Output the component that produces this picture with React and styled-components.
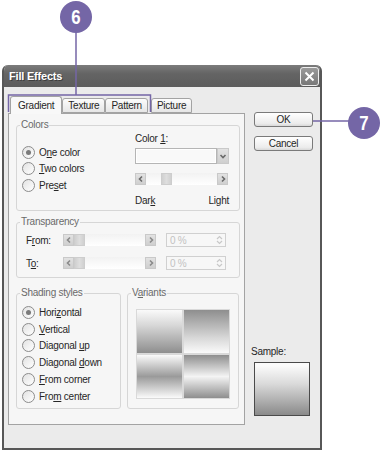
import React from 'react';
import styled, {createGlobalStyle} from 'styled-components';

const GlobalStyle = createGlobalStyle`
  html, body {
    margin: 0;
    padding: 0;
    background: #ffffff;
  }
  body {
    font-family: "Liberation Sans", Arial, sans-serif;
    font-size: 10px;
    letter-spacing: -0.25px;
    color: #262626;
  }
`;

const Page = styled.div`
  position: relative;
  width: 381px;
  height: 453px;
  overflow: hidden;
  padding: 65px 0 0 2px;
  box-sizing: border-box;
`;

const Callout = styled.div`
  position: absolute;
  left: ${p => p.x - 16}px;
  top: ${p => p.y - 16}px;
  width: 32px;
  height: 32px;
  border-radius: 50%;
  background: #7466a6;
  color: #fff;
  font-family: "Liberation Sans", Arial, sans-serif;
  font-weight: bold;
  font-size: 21px;
  display: flex;
  align-items: center;
  justify-content: center;
  z-index: 3;
  span {
    display: inline-block;
    transform: scaleX(0.8);
  }
`;

const Leaders = styled.svg`
  position: absolute;
  left: 0;
  top: 0;
  width: 381px;
  height: 453px;
  pointer-events: none;
  z-index: 2;
`;

const Dialog = styled.div`
  width: 320px;
  height: 385px;
  box-sizing: border-box;
  border: 2px solid #575757;
  border-top: none;
  border-radius: 6px 6px 0 0;
  background: #ebebeb;
  display: flex;
  flex-direction: column;
  overflow: hidden;
`;

const TitleBar = styled.div`
  height: 22px;
  flex: none;
  background: linear-gradient(#7c7c7c, #646464 40%, #5c5c5c);
  display: flex;
  align-items: center;
  justify-content: space-between;
  padding: 0 1px 0 5px;
`;

const Title = styled.span`
  color: #fff;
  font-weight: bold;
  font-size: 11px;
  letter-spacing: -0.2px;
  text-shadow: 1px 1px 0 #3e3e3e;
`;

const CloseBtn = styled.div`
  width: 17px;
  height: 17px;
  border: 1px solid #eee;
  border-radius: 3px;
  background: linear-gradient(#9a9a9a, #787878);
  display: flex;
  align-items: center;
  justify-content: center;
`;

const Body = styled.div`
  flex: 1;
  display: flex;
  padding: 8px 0 0 4px;
  gap: 8px;
`;

const LeftCol = styled.div`
  width: 237px;
  display: flex;
  flex-direction: column;
`;

const TabRow = styled.div`
  display: flex;
  align-items: flex-end;
  height: 18px;
  padding-left: 2px;
`;

const Tab = styled.div`
  height: ${p => (p.$active ? 18 : 15)}px;
  padding: 0 ${p => (p.$active ? 7 : 5)}px;
  margin-left: ${p => (p.$gap ? 3 : 0)}px;
  box-sizing: border-box;
  border: 1px solid #a3a3a3;
  border-bottom: ${p => (p.$active ? 'none' : '1px solid #a3a3a3')};
  border-radius: 3px 3px 0 0;
  background: ${p => (p.$active ? '#f8f8f8' : 'linear-gradient(#fcfcfc, #e6e6e6)')};
  display: flex;
  align-items: center;
  position: relative;
  top: ${p => (p.$active ? 1 : 0)}px;
  z-index: ${p => (p.$active ? 1 : 0)};
`;

const Panel = styled.div`
  height: 312px;
  box-sizing: border-box;
  border: 1px solid #a3a3a3;
  background: #f6f6f6;
  padding: 5px 5px 0 7px;
  display: flex;
  flex-direction: column;
`;

const Group = styled.fieldset`
  margin: 0;
  box-sizing: border-box;
  height: ${p => p.$h}px;
  width: ${p => p.$w || 224}px;
  border: 1px solid #d6d6d6;
  border-radius: 3px;
  padding: 0 8px;
  margin-top: ${p => p.$mt || 0}px;
`;

const Legend = styled.legend`
  color: #6a6a6a;
  padding: 0 1px;
  margin-left: -5px;
  line-height: 12px;
`;

const ColorsGrid = styled.div`
  display: grid;
  grid-template-columns: 110px 94px;
`;

const RadioList = styled.div`
  display: flex;
  flex-direction: column;
  padding-top: ${p => p.$pt}px;
  margin-left: -3px;
`;

const RadioRow = styled.div`
  height: ${p => p.$h}px;
  display: flex;
  align-items: center;
  gap: 4px;
  white-space: nowrap;
`;

const RadioDot = styled.span`
  width: 11px;
  height: 11px;
  border-radius: 50%;
  border: 1px solid #8c8c8c;
  background: linear-gradient(135deg, #e2e2e2, #ffffff);
  display: flex;
  align-items: center;
  justify-content: center;
  flex: none;
  &::after {
    content: '';
    width: 5px;
    height: 5px;
    border-radius: 50%;
    background: ${p => (p.$on ? '#7a7a7a' : 'transparent')};
  }
`;

const U = styled.span`
  text-decoration: underline;
`;

const ColorSide = styled.div`
  display: flex;
  flex-direction: column;
  padding-top: 1px;
`;

const FieldLabel = styled.div`
  height: 13px;
  line-height: 13px;
`;

const Dropdown = styled.div`
  margin-top: 3px;
  height: 16px;
  display: flex;
  box-sizing: border-box;
`;

const DropField = styled.div`
  flex: 1;
  border: 1px solid #b5b5b5;
  background: #f9f9f9;
  box-shadow: inset 0 0 0 1px #fff;
`;

const ArrowBtn = styled.div`
  width: ${p => p.$w || 11}px;
  height: 100%;
  flex: none;
  background: linear-gradient(#e2e2e2, #cfcfcf);
  border: 1px solid #c9c9c9;
  box-sizing: border-box;
  display: flex;
  align-items: center;
  justify-content: center;
`;

const Slider = styled.div`
  height: 12px;
  width: ${p => p.$w}px;
  display: flex;
  background: linear-gradient(#f2f2f2, #ffffff);
  margin-top: ${p => p.$mt || 0}px;
  flex: none;
`;

const Thumb = styled.div`
  width: 11px;
  height: 100%;
  margin-left: ${p => p.$at}px;
  background: linear-gradient(90deg, #d0d0d0, #dedede, #d0d0d0);
  border: 1px solid #cdcdcd;
  box-sizing: border-box;
  margin-right: auto;
`;

const ScaleLabels = styled.div`
  display: flex;
  justify-content: space-between;
  margin-top: 9px;
  line-height: 13px;
`;

const TransRow = styled.div`
  height: 12px;
  display: flex;
  align-items: center;
  margin-top: ${p => p.$mt}px;
`;

const TransLabel = styled.div`
  width: 37px;
  margin-left: 1px;
  flex: none;
`;

const SpinBox = styled.div`
  width: 60px;
  height: 14px;
  margin-left: 10px;
  flex: none;
  box-sizing: border-box;
  border: 1px solid #d0d0d0;
  background: #f7f7f7;
  color: #c2c2c2;
  display: flex;
  align-items: center;
  justify-content: space-between;
  padding: 0 2px 0 3px;
`;

const BottomRow = styled.div`
  display: flex;
  gap: 6px;
  margin-top: 9px;
`;

const VariantGrid = styled.div`
  display: grid;
  grid-template-columns: 45px 45px;
  grid-auto-rows: 43px;
  gap: 2px;
  margin-top: 10px;
  background: #d9d9d9;
  padding: 1px;
  width: fit-content;
`;

const Swatch = styled.div`
  background: ${p => p.$bg};
`;

const RightCol = styled.div`
  width: 59px;
  display: flex;
  flex-direction: column;
  padding-top: 17px;
  margin-left: 1px;
`;

const Button = styled.div`
  height: 15px;
  box-sizing: border-box;
  border: 1px solid #7a7a7a;
  border-radius: 3px;
  background: linear-gradient(#ffffff, #ececec 80%, #d8d8d8);
  display: flex;
  align-items: center;
  justify-content: center;
  margin-bottom: 9px;
`;

const SampleLabel = styled.div`
  margin-top: 185px;
  line-height: 13px;
  margin-left: -3px;
`;

const SampleBox = styled.div`
  width: 56px;
  height: 54px;
  margin-top: 4px;
  box-sizing: border-box;
  border: 1px solid #4a4a4a;
  background: linear-gradient(#fbfbfb 5%, #dadada 40%, #8a8a8a);
`;

const Chevron = ({dir, color = '#6a6a6a'}) => {
  const d = {
    left: 'M5 1.5 L2.5 4 L5 6.5',
    right: 'M3 1.5 L5.5 4 L3 6.5',
    down: 'M1.5 3 L4 5.5 L6.5 3',
  }[dir];
  return (
    <svg width="8" height="8" viewBox="0 0 8 8">
      <path d={d} fill="none" stroke={color} strokeWidth="1.6"/>
    </svg>
  );
};

const SpinArrows = () => (
  <svg width="7" height="10" viewBox="0 0 7 10">
    <path d="M1 4 L3.5 1.5 L6 4 M1 6 L3.5 8.5 L6 6" fill="none" stroke="#c8c8c8" strokeWidth="1.2"/>
  </svg>
);

const Radio = ({on, h, children}) => (
  <RadioRow $h={h}>
    <RadioDot $on={on}/>
    <span>{children}</span>
  </RadioRow>
);

const variants = [
  'linear-gradient(#fafafa, #d8d8d8 35%, #8e8e8e)',
  'linear-gradient(#8e8e8e, #d8d8d8 65%, #fafafa)',
  'linear-gradient(#fafafa, #9a9a9a 50%, #fafafa)',
  'linear-gradient(#8e8e8e, #f4f4f4 50%, #8e8e8e)',
];

export default function App() {
  return (
    <>
      <GlobalStyle/>
      <Page>
        <Leaders viewBox="0 0 381 453">
          <g stroke="#7466a6" strokeWidth="1.5" fill="none">
            <line x1="76" y1="30" x2="76" y2="95"/>
            <polyline points="8.5,112 8.5,95 150.5,95 150.5,112"/>
            <line x1="313" y1="121" x2="350" y2="121"/>
          </g>
        </Leaders>
        <Callout x={76} y={17}><span>6</span></Callout>
        <Callout x={364} y={123}><span>7</span></Callout>

        <Dialog>
          <TitleBar>
            <Title>Fill Effects</Title>
            <CloseBtn>
              <svg width="11" height="11" viewBox="0 0 11 11">
                <path d="M1.5 1.5 L9.5 9.5 M9.5 1.5 L1.5 9.5" stroke="#fff" strokeWidth="2"/>
              </svg>
            </CloseBtn>
          </TitleBar>

          <Body>
            <LeftCol>
              <TabRow>
                <Tab $active>Gradient</Tab>
                <Tab>Texture</Tab>
                <Tab>Pattern</Tab>
                <Tab $gap>Picture</Tab>
              </TabRow>
              <Panel>
                <Group $h={92}>
                  <Legend>Colors</Legend>
                  <ColorsGrid>
                    <RadioList $pt={13}>
                      <Radio on h={16.5}>O<U>n</U>e color</Radio>
                      <Radio h={16.5}><U>T</U>wo colors</Radio>
                      <Radio h={16.5}>Pre<U>s</U>et</Radio>
                    </RadioList>
                    <ColorSide>
                      <FieldLabel>Color <U>1</U>:</FieldLabel>
                      <Dropdown>
                        <DropField/>
                        <ArrowBtn $w={12}><Chevron dir="down"/></ArrowBtn>
                      </Dropdown>
                      <Slider $w={93} $mt={9}>
                        <ArrowBtn><Chevron dir="left"/></ArrowBtn>
                        <Thumb $at={15}/>
                        <ArrowBtn><Chevron dir="right"/></ArrowBtn>
                      </Slider>
                      <ScaleLabels>
                        <span>Dar<U>k</U></span>
                        <span>Light</span>
                      </ScaleLabels>
                    </ColorSide>
                  </ColorsGrid>
                </Group>

                <Group $h={62} $mt={5}>
                  <Legend>Transparency</Legend>
                  <TransRow $mt={6}>
                    <TransLabel>F<U>r</U>om:</TransLabel>
                    <Slider $w={93}>
                      <ArrowBtn><Chevron dir="left" color="#8a8a8a"/></ArrowBtn>
                      <Thumb $at={0}/>
                      <ArrowBtn><Chevron dir="right" color="#8a8a8a"/></ArrowBtn>
                    </Slider>
                    <SpinBox>0 %<SpinArrows/></SpinBox>
                  </TransRow>
                  <TransRow $mt={11}>
                    <TransLabel>T<U>o</U>:</TransLabel>
                    <Slider $w={93}>
                      <ArrowBtn><Chevron dir="left" color="#8a8a8a"/></ArrowBtn>
                      <Thumb $at={0}/>
                      <ArrowBtn><Chevron dir="right" color="#8a8a8a"/></ArrowBtn>
                    </Slider>
                    <SpinBox>0 %<SpinArrows/></SpinBox>
                  </TransRow>
                </Group>

                <BottomRow>
                  <Group $h={122} $w={106}>
                    <Legend>Shading styles</Legend>
                    <RadioList $pt={5}>
                      <Radio on h={16.8}>Hori<U>z</U>ontal</Radio>
                      <Radio h={16.8}><U>V</U>ertical</Radio>
                      <Radio h={16.8}>Diagonal <U>u</U>p</Radio>
                      <Radio h={16.8}>Diagonal <U>d</U>own</Radio>
                      <Radio h={16.8}><U>F</U>rom corner</Radio>
                      <Radio h={16.8}>Fro<U>m</U> center</Radio>
                    </RadioList>
                  </Group>
                  <Group $h={122} $w={112}>
                    <Legend>V<U>a</U>riants</Legend>
                    <VariantGrid>
                      {variants.map((bg, i) => <Swatch key={i} $bg={bg}/>)}
                    </VariantGrid>
                  </Group>
                </BottomRow>
              </Panel>
            </LeftCol>

            <RightCol>
              <Button>OK</Button>
              <Button>Cancel</Button>
              <SampleLabel>Sample:</SampleLabel>
              <SampleBox/>
            </RightCol>
          </Body>
        </Dialog>
      </Page>
    </>
  );
}
